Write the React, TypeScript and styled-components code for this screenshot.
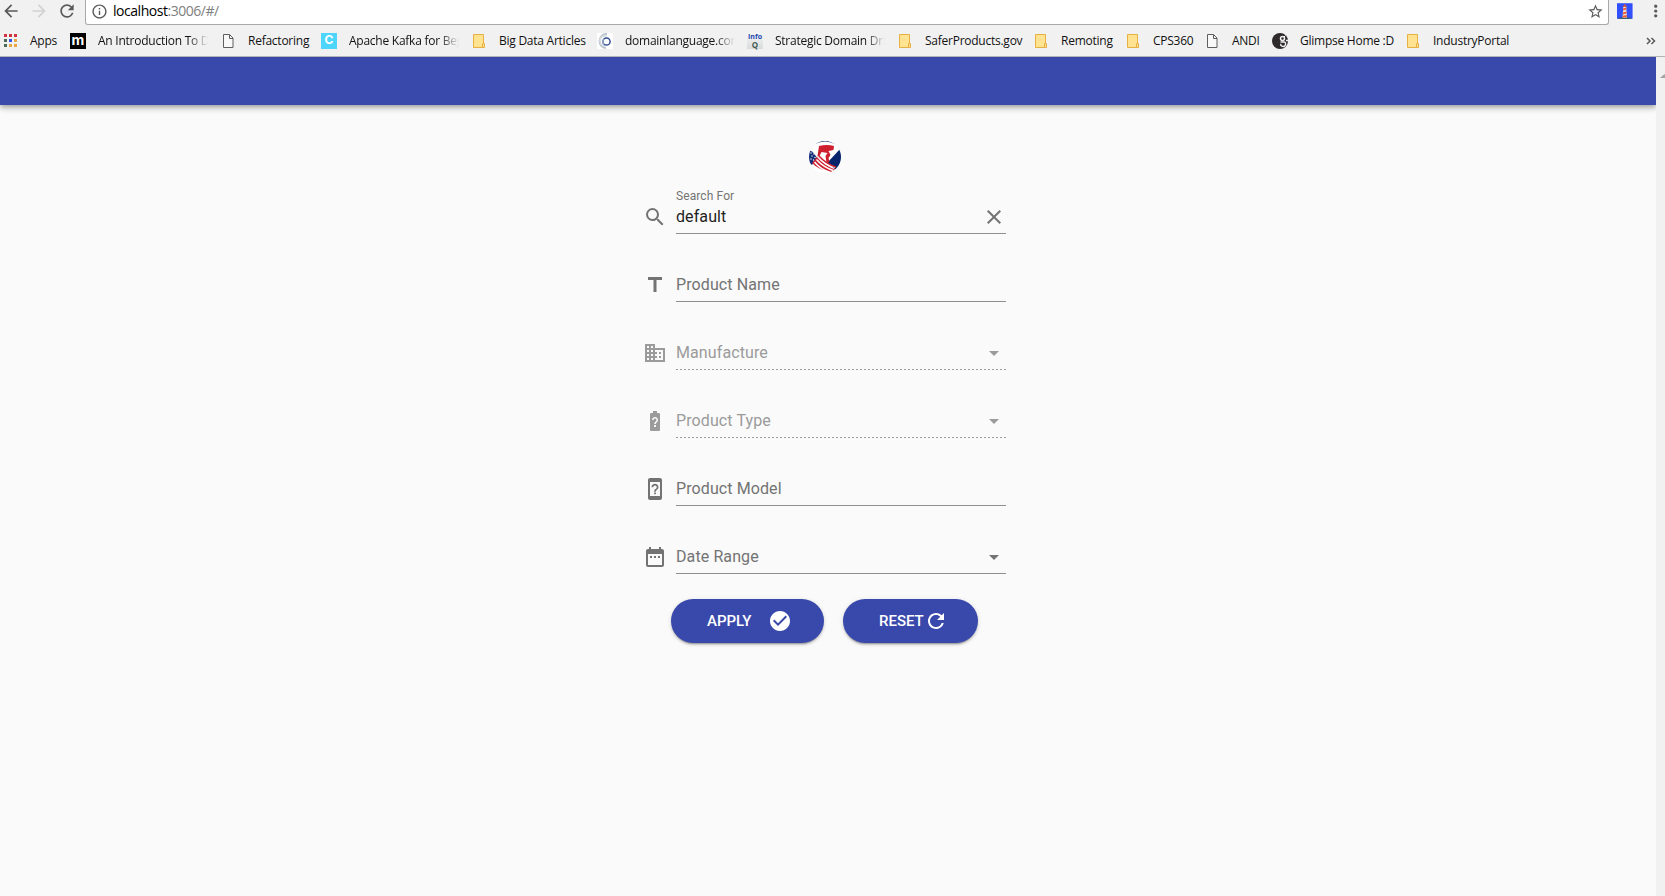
import React from 'react';
import styled, { createGlobalStyle } from 'styled-components';
import {
  MdArrowBack, MdArrowForward, MdRefresh, MdInfoOutline, MdStarBorder, MdMoreVert,
  MdSearch, MdTitle, MdDomain, MdBatteryUnknown, MdDeviceUnknown, MdDateRange,
  MdArrowDropDown, MdClose, MdCheckCircle,
} from 'react-icons/md';

const Global = createGlobalStyle`
  * { box-sizing: border-box; }
  body { margin: 0; background: #fafafa; overflow: hidden; }
`;

const Window = styled.div`
  width: 100%;
  height: 896px;
  display: flex;
  flex-direction: column;
  overflow: hidden;
`;

const Toolbar = styled.div`
  height: 25px;
  flex: none;
  display: flex;
  align-items: flex-start;
  background: #f1f1f1;
  color: #5a5a5a;
`;

const NavButtons = styled.div`
  width: 85px;
  height: 22px;
  display: flex;
  align-items: center;
  gap: 8px;
  padding-left: 1px;
`;

const NavIcon = styled.span<{ $off?: boolean }>`
  display: flex;
  width: 20px;
  color: ${(p) => (p.$off ? '#d2d2d2' : '#5a5a5a')};
`;

const AddressBar = styled.div`
  flex: 1;
  height: 25px;
  display: flex;
  align-items: center;
  padding: 0 4px 2px 5px;
  background: #fff;
  border: 1px solid #a9a9a9;
  border-top: 0;
  border-radius: 0 0 3px 3px;
`;

const Url = styled.div`
  flex: 1;
  margin-left: 5px;
  font: 14px/18px 'Open Sans', sans-serif;
  letter-spacing: -0.47px;
  color: #808080;
  b { font-weight: 400; color: #000; }
`;

const ToolbarEnd = styled.div`
  width: 56px;
  height: 22px;
  display: flex;
  align-items: center;
  padding-left: 8px;
  gap: 13px;
`;

const Bookmarks = styled.div`
  height: 32px;
  flex: none;
  display: flex;
  align-items: center;
  gap: 12px;
  padding: 0 9px 0 2px;
  background: #f1f1f1;
  border-bottom: 1px solid #b4b2b4;
`;

const Bookmark = styled.div`
  display: flex;
  align-items: center;
  gap: 12px;
  svg { display: block; flex: none; }
`;

const BookmarkLabel = styled.span<{ $width: number; $fade?: boolean; $spacing?: number }>`
  width: ${(p) => p.$width}px;
  overflow: ${(p) => (p.$fade ? 'hidden' : 'visible')};
  white-space: nowrap;
  font: 12px/16px 'Open Sans', sans-serif;
  letter-spacing: ${(p) => p.$spacing ?? -0.25}px;
  color: #111;
  ${(p) => p.$fade && 'mask-image: linear-gradient(to right, #000 82%, transparent);'}
`;

const More = styled.svg`
  margin-left: auto;
`;

const Viewport = styled.div`
  flex: 1;
  min-height: 0;
  display: flex;
`;

const Page = styled.main`
  flex: 1;
  display: flex;
  flex-direction: column;
  overflow: hidden;
  font-family: Roboto, sans-serif;
`;

const AppBar = styled.header`
  height: 48px;
  flex: none;
  background: #3949ab;
  box-shadow: 0 2px 4px -1px rgba(0, 0, 0, 0.2), 0 4px 5px 0 rgba(0, 0, 0, 0.14), 0 1px 10px 0 rgba(0, 0, 0, 0.12);
`;

const Scrollbar = styled.div`
  width: 9px;
  background: #f1f1f1;
  padding: 7px 0 0 4px;
  overflow: hidden;
`;

const Form = styled.form`
  width: 363px;
  margin: 36px 0 0 643px;
  display: flex;
  flex-direction: column;
`;

const Logo = styled.svg`
  display: block;
  align-self: center;
  margin-bottom: 15px;
`;

const FloatingLabel = styled.label`
  height: 16px;
  margin-left: 33px;
  font-size: 12px;
  line-height: 16px;
  letter-spacing: 0.1px;
  color: #757575;
`;

const Field = styled.div<{ $disabled?: boolean }>`
  height: 30px;
  margin-bottom: 38px;
  display: flex;
  gap: 9px;
  color: ${(p) => (p.$disabled ? '#9b9b9b' : '#737373')};
`;

const FieldIcon = styled.span`
  display: flex;
  width: 24px;
  padding-top: 1px;
`;

const Control = styled.div<{ $disabled?: boolean }>`
  flex: 1;
  display: flex;
  align-items: flex-start;
  justify-content: space-between;
  padding: 1px 0 0;
  background: ${(p) => (p.$disabled
    ? 'repeating-linear-gradient(to right, #9b9b9b 0 2px, transparent 2px 4px)'
    : 'linear-gradient(#8f8f8f, #8f8f8f)')} left bottom / 100% 1px no-repeat;
  svg { margin-right: 0; }
`;

const Value = styled.span<{ $filled?: boolean }>`
  font-size: 16px;
  line-height: 24px;
  letter-spacing: 0.1px;
  color: ${(p) => (p.$filled ? '#1f1f1f' : 'inherit')};
`;

const Actions = styled.div`
  display: flex;
  gap: 19px;
  margin: -13px 0 0 28px;
`;

const Button = styled.button<{ $width: number; $gap: number }>`
  width: ${(p) => p.$width}px;
  height: 44px;
  flex: none;
  display: flex;
  align-items: center;
  gap: ${(p) => p.$gap}px;
  padding: 0 0 0 36px;
  border: 0;
  border-radius: 22px;
  background: #3949ab;
  color: #fff;
  font: 500 15px/20px Roboto, sans-serif;
  box-shadow: 0 3px 1px -2px rgba(0, 0, 0, 0.2), 0 2px 2px 0 rgba(0, 0, 0, 0.14), 0 1px 5px 0 rgba(0, 0, 0, 0.12);
`;

const FolderIcon = () => (
  <svg width="16" height="16" viewBox="0 0 16 16">
    <path d="M2.5 1.5h10v9h1v4h-11z" fill="#ffe391" stroke="#e8b043" />
    <path d="M11.5 14v-3.5h1" fill="none" stroke="#e8b043" />
  </svg>
);

const FileIcon = () => (
  <svg width="16" height="16" viewBox="0 0 16 16" fill="none" stroke="#5f5f5f">
    <path d="M3.500 1.500h6l3.500 3.500v9.500h-9.500zM9.500 1.500v4h3.500" fill="#f8f8f8" />
  </svg>
);

const AppsIcon = () => {
  const colors = ['#d0333f', '#d0333f', '#d0333f', '#486b56', '#3355ee', '#e7a744', '#486b56', '#e7a744', '#e7a744'];
  return (
    <svg width="16" height="16" viewBox="0 0 16 16">
      {colors.map((c, i) => (
        <rect key={i} x={2 + (i % 3) * 5} y={1 + Math.floor(i / 3) * 5} width="3" height="3" fill={c} />
      ))}
    </svg>
  );
};

const Tile = styled.span<{ $bg: string; $size: number }>`
  width: 16px;
  height: 16px;
  flex: none;
  display: flex;
  align-items: center;
  justify-content: center;
  background: ${(p) => p.$bg};
  color: #fff;
  font: 700 ${(p) => p.$size}px/14px Inter, sans-serif;
  padding-bottom: 2px;
`;

const InfoTile = styled.span`
  width: 16px;
  height: 16px;
  flex: none;
  display: flex;
  flex-direction: column;
  align-items: center;
  background: linear-gradient(#f5f5f5, #d9dbdc);
  font: 700 7px/8px 'Open Sans', sans-serif;
  color: #2348b0;
  i { font-style: normal; color: #3c5b52; font-size: 8px; line-height: 7px; }
`;

const RingsIcon = () => (
  <svg width="16" height="16" viewBox="0 0 16 16" fill="none">
    <rect width="16" height="16" fill="#fff" />
    <path d="M10 1A7 7 0 1 0 9 15" stroke="#b9c3cd" strokeWidth="2" />
    <path d="M10 3.500A5 5 0 1 0 8 13" stroke="#d5dbe1" strokeWidth="1.500" />
    <circle cx="9.500" cy="8.500" r="3.600" stroke="#334f94" strokeWidth="1.500" />
    <path d="M7 5.800a3.600 3.600 0 0 0 0 5.300" stroke="#8fa4c4" strokeWidth="1.500" />
  </svg>
);

const GlimpseIcon = () => (
  <svg width="16" height="16" viewBox="0 0 16 16" fill="none">
    <circle cx="8" cy="8" r="8" fill="#2e292a" />
    <path d="M13.500 2.500 12 4" stroke="#fff" />
    <circle cx="10.500" cy="5.500" r="2" stroke="#f1f1f1" strokeWidth="1.500" />
    <path d="M8.500 9h3.500q2 0 1.500 2.500t-3 1.800-1.500-2.500M14 7.500h2" stroke="#f1f1f1" strokeWidth="1.400" />
  </svg>
);

const LighthouseIcon = () => (
  <svg width="16" height="16" viewBox="0 0 16 16">
    <rect width="16" height="16" fill="#304ffe" />
    <path d="M1 15.500q7-2 14 0v.5H1z" fill="#2f5d50" />
    <path d="M6.500 4h3l.8 11H5.700z" fill="#e9e2de" />
    <path d="M6.300 5.500l3.300-1 .1 2-3.500 1zM6 9.500l3.800-1 .1 2-4 1zM5.800 13l4.200-1 .2 2.500-4.400.5z" fill="#ec5b36" />
    <path d="M6 2.500h4V4H6zM7.300 1h1.400v1.500H7.300z" fill="#d65a3a" />
  </svg>
);

const bookmarks: { icon: React.ReactNode; label: string; width: number; fade?: boolean; spacing?: number }[] = [
  { icon: <AppsIcon />, label: 'Apps', width: 28 },
  { icon: <Tile $bg="#000" $size={14}>m</Tile>, label: 'An Introduction To Domain', width: 110, fade: true },
  { icon: <FileIcon />, label: 'Refactoring', width: 61 },
  { icon: <Tile $bg="#4dd5fb" $size={12}>C</Tile>, label: 'Apache Kafka for Beginners', width: 110, fade: true },
  { icon: <FolderIcon />, label: 'Big Data Articles', width: 86 },
  { icon: <RingsIcon />, label: 'domainlanguage.com', width: 110, fade: true },
  { icon: <InfoTile>Info<i>Q</i></InfoTile>, label: 'Strategic Domain Driven', width: 110, fade: true },
  { icon: <FolderIcon />, label: 'SaferProducts.gov', width: 96 },
  { icon: <FolderIcon />, label: 'Remoting', width: 52 },
  { icon: <FolderIcon />, label: 'CPS360', width: 39 },
  { icon: <FileIcon />, label: 'ANDI', width: 28 },
  { icon: <GlimpseIcon />, label: 'Glimpse Home :D', width: 93 },
  { icon: <FolderIcon />, label: 'IndustryPortal', width: 74 },
];

const fields = [
  { Icon: MdTitle, label: 'Product Name' },
  { Icon: MdDomain, label: 'Manufacture', disabled: true, select: true },
  { Icon: MdBatteryUnknown, label: 'Product Type', disabled: true, select: true },
  { Icon: MdDeviceUnknown, label: 'Product Model' },
  { Icon: MdDateRange, label: 'Date Range', select: true },
];

const AgencyLogo = () => (
  <Logo width="32" height="32" viewBox="0 0 32 32">
    <defs><clipPath id="seal"><circle cx="16" cy="16" r="16" /></clipPath></defs>
    <g clipPath="url(#seal)">
      <rect width="32" height="32" fill="#fff" />
      <path d="M6 3Q16-2 26 3L27 0H5z" fill="#173a7a" />
      <path d="M32 7 18.500 21.500 27 29l5-3z" fill="#06246b" />
      <path d="M0 9q5 2 8 8l-5 7-3-2z" fill="#142e78" />
      <path d="M10 5q8-2 15 0l-.5 4-5 1 2 4-2 3 1 4-3 1-1-7 2-3-6-1-3 6-1-2z" fill="#cf2030" />
      <path d="M8 16q7 9 20 13l-3 3Q9 29 3 22z" fill="#cf2030" />
      <path d="M7.500 18.500q7 8 18 11.500M5.500 21q6 7.500 16 10.500M3.500 24q4 6 10 8" stroke="#fff" strokeWidth="1.500" fill="none" />
      <path d="M9 15.500q8 8 17 11" stroke="#fff" strokeWidth="1.300" fill="none" />
      <path d="M10 15q7 8 17 11" stroke="#cf2030" strokeWidth="1.500" fill="none" />
      <g fill="#fff">
        {[[2, 12], [5, 13], [3, 15], [6, 16.500], [2, 18], [4.500, 19]].map(([x, y]) => (
          <circle key={`${x}-${y}`} cx={x} cy={y} r="0.700" />
        ))}
      </g>
    </g>
  </Logo>
);

export default function App() {
  return (
    <Window>
      <Global />
      <Toolbar>
        <NavButtons>
          <NavIcon><MdArrowBack size={20} /></NavIcon>
          <NavIcon $off><MdArrowForward size={20} /></NavIcon>
          <NavIcon><MdRefresh size={20} /></NavIcon>
        </NavButtons>
        <AddressBar>
          <MdInfoOutline size={17} />
          <Url><b>localhost</b>:3006/#/</Url>
          <MdStarBorder size={17} />
        </AddressBar>
        <ToolbarEnd>
          <LighthouseIcon />
          <MdMoreVert size={20} />
        </ToolbarEnd>
      </Toolbar>
      <Bookmarks>
        {bookmarks.map((b) => (
          <Bookmark key={b.label}>
            {b.icon}
            <BookmarkLabel $width={b.width} $fade={b.fade} $spacing={b.spacing}>{b.label}</BookmarkLabel>
          </Bookmark>
        ))}
        <More width="10" height="8" viewBox="0 0 10 8" fill="none" stroke="#5a5a5a" strokeWidth="1.500">
          <path d="M1 1l3 3-3 3M5.500 1l3 3-3 3" />
        </More>
      </Bookmarks>
      <Viewport>
        <Page>
          <AppBar />
          <Form>
            <AgencyLogo />
            <FloatingLabel>Search For</FloatingLabel>
            <Field>
              <FieldIcon><MdSearch size={24} /></FieldIcon>
              <Control>
                <Value $filled>default</Value>
                <MdClose size={24} />
              </Control>
            </Field>
            {fields.map(({ Icon, label, disabled, select }) => (
              <Field key={label} $disabled={disabled}>
                <FieldIcon><Icon size={24} /></FieldIcon>
                <Control $disabled={disabled}>
                  <Value>{label}</Value>
                  {select && <MdArrowDropDown size={24} />}
                </Control>
              </Field>
            ))}
            <Actions>
              <Button type="button" $width={153} $gap={16}>APPLY <MdCheckCircle size={24} /></Button>
              <Button type="button" $width={135} $gap={0}>RESET<MdRefresh size={24} /></Button>
            </Actions>
          </Form>
        </Page>
        <Scrollbar>
          <svg width="9" height="4" viewBox="0 0 9 4"><path d="M0 4 4.500 0 9 4z" fill="#a3a3a3" /></svg>
        </Scrollbar>
      </Viewport>
    </Window>
  );
}
